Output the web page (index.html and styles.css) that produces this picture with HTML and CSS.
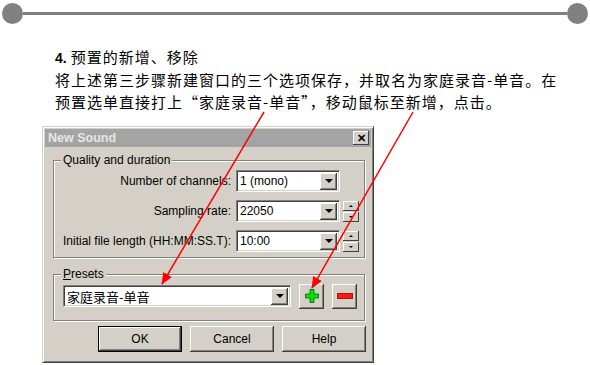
FILE: index.html
```html
<!DOCTYPE html>
<html>
<head>
  <title>预置的新增、移除</title>
  <link rel="stylesheet" href="styles.css">
</head>
<body>
  <div class="topbar">
    <span class="dot"></span>
    <span class="rule"></span>
    <span class="dot"></span>
  </div>

  <div class="text">
    <p class="step"><b>4.</b>预置的新增、移除</p>
    <p>将上述第三步骤新建窗口的三个选项保存，并取名为家庭录音-单音。在<br>预置选单直接打上“家庭录音-单音”，移动鼠标至新增，点击。</p>
  </div>

  <div class="dialog">
    <div class="titlebar">
      <span>New Sound</span>
      <span class="close">&#x2715;</span>
    </div>

    <div class="group quality">
      <span class="legend">Quality and duration</span>
      <div class="row">
        <label>Number of channels:</label>
        <div class="combo"><span>1 (mono)</span><span class="drop"></span></div>
      </div>
      <div class="row">
        <label>Sampling rate:</label>
        <div class="combo"><span>22050</span><span class="drop"></span></div>
        <div class="spin"><span class="up"></span><span class="down"></span></div>
      </div>
      <div class="row">
        <label>Initial file length (HH:MM:SS.T):</label>
        <div class="combo"><span>10:00</span><span class="drop"></span></div>
        <div class="spin"><span class="up"></span><span class="down"></span></div>
      </div>
    </div>

    <div class="group presets">
      <span class="legend"><u>P</u>resets</span>
      <div class="row">
        <div class="combo wide"><span class="cjk">家庭录音-单音</span><span class="drop"></span></div>
        <button class="tool add">
          <svg width="14" height="14" viewBox="0 0 14 14">
            <path d="M5 0.5 H9 V5 H13.5 V9 H9 V13.5 H5 V9 H0.5 V5 H5 Z" fill="#00e400" stroke="#1a7a1a" stroke-width="1"/>
          </svg>
        </button>
        <button class="tool remove">
          <svg width="16" height="6" viewBox="0 0 16 6">
            <rect x="0.5" y="0.5" width="15" height="5" fill="#ff1a1a" stroke="#b01010" stroke-width="1"/>
          </svg>
        </button>
      </div>
    </div>

    <div class="buttons">
      <button class="btn default">OK</button>
      <button class="btn">Cancel</button>
      <button class="btn">Help</button>
    </div>
  </div>

  <svg class="arrows" width="590" height="365" viewBox="0 0 590 365">
    <defs>
      <marker id="head" markerWidth="12" markerHeight="10" refX="11" refY="5" orient="auto" markerUnits="userSpaceOnUse">
        <path d="M0,0 L12,5 L0,10 Z" fill="#ff0000"/>
      </marker>
    </defs>
    <line x1="264" y1="112" x2="162" y2="284" stroke="#ff0000" stroke-width="1.5" marker-end="url(#head)"/>
    <line x1="413" y1="112" x2="312" y2="288" stroke="#ff0000" stroke-width="1.5" marker-end="url(#head)"/>
  </svg>
</body>
</html>
```

FILE: styles.css
```css
body {
  margin: 0;
  background: #fff;
  font-family: "Liberation Sans", Arial, sans-serif;
  position: relative;
  width: 590px;
  height: 365px;
  overflow: hidden;
}

.topbar {
  display: flex;
  align-items: center;
  padding: 2px 2px 0 2px;
  height: 22px;
}

.dot {
  width: 21px;
  height: 21px;
  border-radius: 50%;
  background: #808080;
  flex: none;
}

.rule {
  flex: 1;
  height: 3px;
  background: #808080;
}

.text {
  margin: 22px 0 0 55px;
  font-family: "Noto Sans CJK SC", sans-serif;
  font-size: 15px;
  letter-spacing: 1px;
  line-height: 22px;
  height: 66px;
  color: #000;
}

.text p {
  margin: 0;
}

.step b {
  font-family: "Liberation Sans", Arial, sans-serif;
  font-size: 14px;
  letter-spacing: 0;
  margin-right: 4px;
}

/* dialog */
.dialog {
  margin: 14px 0 0 42px;
  width: 326px;
  height: 231px;
  background: #d4d0c8;
  border: 1px solid #d4d0c8;
  border-right-color: #404040;
  border-bottom-color: #404040;
  box-shadow: inset 1px 1px 0 #fff, inset -1px -1px 0 #808080;
  padding: 2px;
  font-size: 12px;
  color: #000;
}

.titlebar {
  height: 18px;
  background: #a4a4a4;
  color: #e6e6e6;
  font-weight: bold;
  font-size: 12.5px;
  display: flex;
  align-items: center;
  justify-content: space-between;
  padding: 0 2px 0 3px;
}

.close {
  width: 16px;
  height: 14px;
  background: #d4d0c8;
  color: #000;
  font-size: 11px;
  font-weight: bold;
  display: flex;
  align-items: center;
  justify-content: center;
  box-shadow: inset -1px -1px 0 #404040, inset 1px 1px 0 #fff;
}

.group {
  position: relative;
  margin: 0 6px 0 8px;
  border: 1px solid #808080;
  box-shadow: inset 1px 1px 0 #fff, 1px 1px 0 #fff;
}

.legend {
  position: absolute;
  top: -8px;
  left: 7px;
  padding: 0 2px;
  background: #d4d0c8;
  line-height: 15px;
}

.quality {
  margin-top: 13px;
  height: 98px;
  padding-top: 9px;
  box-sizing: border-box;
}

.presets {
  margin-top: 16px;
  height: 47px;
  padding: 10px 0 0 9px;
  box-sizing: border-box;
}

.row {
  display: flex;
  align-items: center;
  height: 22px;
  margin-bottom: 8px;
}

.quality label {
  width: 177px;
  text-align: right;
  margin-right: 5px;
}

.combo {
  width: 104px;
  height: 22px;
  box-sizing: border-box;
  background: #fff;
  border: 1px solid #808080;
  border-right-color: #fff;
  border-bottom-color: #fff;
  box-shadow: inset 1px 1px 0 #404040, inset -1px -1px 0 #d4d0c8;
  display: flex;
  align-items: center;
  justify-content: space-between;
  padding: 0 2px 0 3px;
}

.combo.wide {
  width: 228px;
}

.cjk {
  font-family: "Noto Sans CJK SC", sans-serif;
  font-size: 13px;
}

.drop {
  width: 17px;
  height: 17px;
  box-sizing: border-box;
  background: #d4d0c8;
  box-shadow: inset -1px -1px 0 #404040, inset 1px 1px 0 #fff, inset -2px -2px 0 #808080;
  display: flex;
  align-items: center;
  justify-content: center;
}

.drop::after {
  content: "";
  border-left: 4px solid transparent;
  border-right: 4px solid transparent;
  border-top: 4px solid #000;
}

.spin {
  margin-left: 3px;
  display: flex;
  flex-direction: column;
  gap: 1px;
}

.spin span {
  width: 16px;
  height: 10px;
  background: #d4d0c8;
  box-shadow: inset -1px -1px 0 #404040, inset 1px 1px 0 #fff;
  display: flex;
  align-items: center;
  justify-content: center;
}

.spin .up::after {
  content: "";
  border-left: 2px solid transparent;
  border-right: 2px solid transparent;
  border-bottom: 2px solid #000;
}

.spin .down::after {
  content: "";
  border-left: 2px solid transparent;
  border-right: 2px solid transparent;
  border-top: 2px solid #000;
}

.tool {
  width: 25px;
  height: 25px;
  margin-left: 8px;
  border: none;
  padding: 0;
  background: #d4d0c8;
  box-shadow: inset -1px -1px 0 #404040, inset 1px 1px 0 #fff, inset -2px -2px 0 #808080;
  display: flex;
  align-items: center;
  justify-content: center;
}

.buttons {
  display: flex;
  justify-content: flex-end;
  gap: 8px;
  margin: 5px 5px 0 0;
}

.btn {
  width: 84px;
  height: 26px;
  border: none;
  background: #d4d0c8;
  font-family: "Liberation Sans", Arial, sans-serif;
  font-size: 12px;
  box-shadow: inset -1px -1px 0 #404040, inset 1px 1px 0 #fff, inset -2px -2px 0 #808080;
}

.btn.default {
  border: 1px solid #000;
}

.arrows {
  position: absolute;
  left: 0;
  top: 0;
  pointer-events: none;
}
```
